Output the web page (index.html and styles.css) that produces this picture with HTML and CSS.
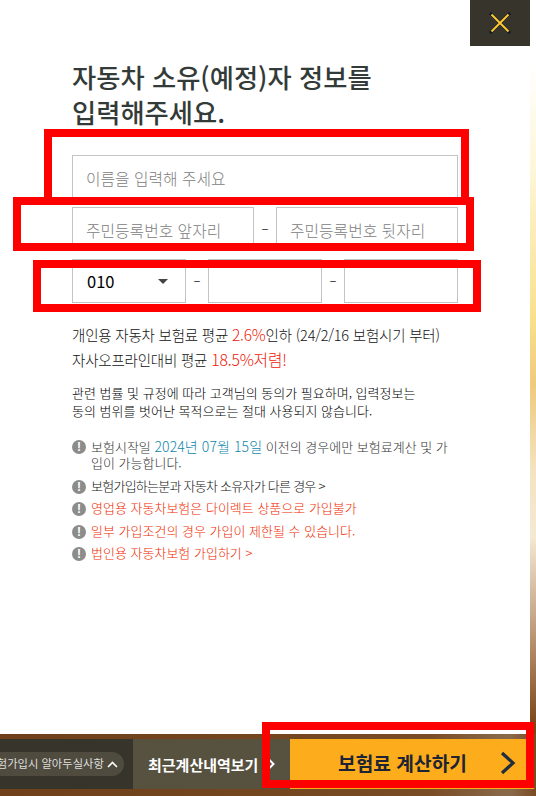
FILE: index.html
```html
<!DOCTYPE html>
<html lang="ko">
<head>
<meta charset="utf-8">
<title>자동차 소유(예정)자 정보</title>
<link rel="stylesheet" href="styles.css">
</head>
<body>
<div class="page">
  <main class="panel">
    <a class="close" href="#" aria-label="닫기">
      <svg width="22" height="22" viewBox="0 0 22 22"><path d="M2 2 20 20M20 2 2 20" fill="none" stroke="#0f1a2c" stroke-width="3" stroke-linecap="square"/><path d="M2.500 2.500 19.500 19.500M19.500 2.500 2.500 19.500" fill="none" stroke="#fdc82f" stroke-width="2"/></svg>
    </a>
    <h1 class="title">자동차 소유(예정)자 정보를<br>입력해주세요.</h1>
    <form class="form">
      <input class="field" placeholder="이름을 입력해 주세요">
      <div class="row">
        <input class="field" placeholder="주민등록번호 앞자리">
        <span class="dash">–</span>
        <input class="field" placeholder="주민등록번호 뒷자리">
      </div>
      <div class="row phone">
        <div class="field select"><span>010</span><i class="caret"></i></div>
        <span class="dash">–</span>
        <input class="field">
        <span class="dash">–</span>
        <input class="field">
      </div>
    </form>
    <p class="promo">개인용 자동차 보험료 평균 <em>2.6%</em>인하 (24/2/16 보험시기 부터)<br>자사오프라인대비 평균 <em class="big">18.5%저렴!</em></p>
    <p class="consent">관련 법률 및 규정에 따라 고객님의 동의가 필요하며, 입력정보는<br>동의 범위를 벗어난 목적으로는 절대 사용되지 않습니다.</p>
    <ul class="notes">
      <li><i class="bang">!</i><span>보험시작일 <b class="blue">2024년 07월 15일</b> 이전의 경우에만 보험료계산 및 가입이 가능합니다.</span></li>
      <li class="owner"><i class="bang">!</i><span>보험가입하는분과 자동차 소유자가 다른 경우 &gt;</span></li>
      <li class="red"><i class="bang">!</i><span>영업용 자동차보험은 다이렉트 상품으로 가입불가</span></li>
      <li class="red"><i class="bang">!</i><span>일부 가입조건의 경우 가입이 제한될 수 있습니다.</span></li>
      <li class="red"><i class="bang">!</i><span>법인용 자동차보험 가입하기 &gt;</span></li>
    </ul>
  </main>
  <footer class="footer">
    <div class="tips"><span class="pill">보험가입시 알아두실사항 <svg width="11" height="7" viewBox="0 0 11 7"><path d="M1 6 5.500 1.500 10 6" fill="none" stroke="#fff" stroke-width="1.600"/></svg></span></div>
    <a class="recent" href="#">최근계산내역보기 <svg width="8" height="12" viewBox="0 0 8 12"><path d="M1.500 1 6.500 6 1.500 11" fill="none" stroke="#fff" stroke-width="2"/></svg></a>
    <a class="calc" href="#"><span>보험료 계산하기</span><svg class="calc-arrow" width="16" height="24" viewBox="0 0 16 24"><path d="M2 2 13 12 2 22" fill="none" stroke="#1f2d3d" stroke-width="3.200"/></svg></a>
  </footer>
  <div class="mark m1"></div>
  <div class="mark m2"></div>
  <div class="mark m3"></div>
  <div class="mark m4"></div>
</div>
</body>
</html>
```
FILE: styles.css
```css
* { box-sizing: border-box; }
html, body { margin: 0; height: 100%; }
body { overflow: hidden; font-family: "Noto Sans CJK KR", "Noto Sans", sans-serif; color: #333; background: #fff; }
.page {
  position: relative; width: 536px; height: 796px; display: flex; flex-direction: column;
  background: linear-gradient(180deg, #fff 0, #fff 60px, #fdf6d8 170px, #f8e08a 320px, #eecb7c 385px, #f3e3c0 470px, #f4e9d2 537px, #c4a486 620px, #7a4618 725px);
}
.panel { position: relative; width: 530px; height: 734px; background: #fff; padding: 59px 72px 0; flex: none; }
.close { position: absolute; top: 0; left: 470px; width: 60px; height: 46px; background: #37342b; display: flex; align-items: center; justify-content: center; }
.title { margin: 0; font-size: 26.300px; line-height: 35px; font-weight: 500; color: #333b38; white-space: nowrap; }
.form { margin-top: 26px; width: 386px; display: flex; flex-direction: column; gap: 8px; }
.field { flex: none; width: 100%; height: 44px; border: 1px solid #c4c4c4; background: #fff; padding: 3px 13px 0; font: 300 15.800px "Noto Sans CJK KR", sans-serif; color: #000; outline: 0; border-radius: 0; }
.row .field { flex: 0 0 182px; width: 182px; min-width: 0; }
.row.phone .field { flex: 0 0 114px; width: 114px; }
.field::placeholder { color: #808080; opacity: 1; }
.row { display: flex; }
.dash { flex: 0 0 22px; text-align: center; line-height: 42px; font-size: 13px; color: #333; }
.select { display: flex; align-items: center; justify-content: space-between; padding: 0 17px 0 14px; font-size: 16.500px; font-weight: 400; color: #000; }
.caret { width: 0; height: 0; border: 5px solid transparent; border-top: 5px solid #444; border-bottom: 0; }
.promo { margin: 19px 0 0; font-size: 14.500px; font-weight: 300; line-height: 25px; white-space: nowrap; color: #111; letter-spacing: -.2px; }
.promo em { font-style: normal; color: #f0200a; font-size: 15.500px; }
.promo .big { font-size: 15.800px; }
.consent { margin: 12px 0 0; font-size: 13px; font-weight: 300; line-height: 18px; white-space: nowrap; color: #000; }
.notes { list-style: none; margin: 18px 0 0; padding: 0; width: 380px; font-size: 13px; font-weight: 300; line-height: 16px; color: #333; }
.notes li { display: flex; gap: 5px; margin-bottom: 6.500px; }
.notes .owner { letter-spacing: -.75px; color: #111; }
.notes .red { color: #f02a00; }
.blue { font-weight: 300; font-size: 14px; letter-spacing: .1px; color: #0f88ad; }
.bang { flex: none; width: 14px; height: 14px; margin-top: 2px; border-radius: 50%; background: #8c8c8c; color: #fff; font: 700 12px/14px "Liberation Sans", sans-serif; text-align: center; letter-spacing: 0; }
.footer { flex: 1; display: flex; padding: 5px 2px 7px 0; background: linear-gradient(90deg, #6f4019 0, #74461f 50%, #7a4c25 80%, #8a6a4c 95%, #7a4c25 100%); }
.tips { flex: 0 0 133px; background: #37342b; display: flex; align-items: center; justify-content: flex-end; overflow: hidden; padding-right: 9px; }
.pill { flex: none; height: 24px; padding: 0 6px 0 12px; border-radius: 12px; background: #4f4b3f; color: #ddd; font-size: 11.300px; line-height: 23px; white-space: nowrap; }
.recent { flex: 0 0 157px; background: #57513f; color: #fff; font-size: 15px; font-weight: 700; display: flex; align-items: center; padding-left: 15px; gap: 9px; text-decoration: none; white-space: nowrap; }
.calc { flex: 1; background: #fdac1c; color: #1d2433; font-size: 19.200px; font-weight: 700; display: flex; align-items: center; justify-content: space-between; padding: 0 18px 3px 48px; text-decoration: none; }
.mark { position: absolute; border: 8px solid #f00; }
.m1 { left: 44px; top: 129px; width: 425px; height: 68px; border-bottom-width: 0; }
.m2 { left: 13px; top: 197px; width: 461px; height: 54px; }
.m3 { left: 33px; top: 260px; width: 448px; height: 52px; }
.m4 { left: 262px; top: 722px; width: 272px; height: 66px; }
```
